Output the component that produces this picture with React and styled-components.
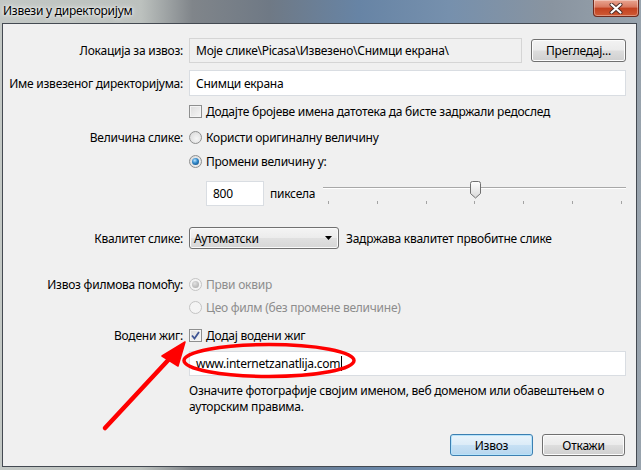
import React from "react";
import styled, { createGlobalStyle } from "styled-components";

const GlobalStyle = createGlobalStyle`
  html, body {
    margin: 0;
    padding: 0;
  }

  body {
    font-family: "Noto Sans", "Open Sans", sans-serif;
    font-size: 12px;
    letter-spacing: -0.25px;
    color: #000000;
  }
`;

const Window = styled.div`
  position: relative;
  width: 641px;
  height: 470px;
  display: flex;
  flex-direction: column;
  overflow: hidden;
  background: linear-gradient(
    90deg,
    #c3c8c5 0%,
    #bcc1be 22%,
    #80858a 30%,
    #6f7985 42%,
    #6784a5 56%,
    #7690ad 70%,
    #8994a0 86%,
    #98a3ad 100%
  );
`;

const TitleBar = styled.div`
  height: 23px;
  display: flex;
  justify-content: space-between;
  align-items: flex-start;
`;

const Title = styled.div`
  padding-left: 3px;
  line-height: 22px;
  color: #000000;
  text-shadow: 0 0 6px #ffffff, 0 0 3px #ffffff;
`;

const CloseButton = styled.div`
  width: 46px;
  height: 17px;
  margin-right: 2px;
  box-sizing: border-box;
  border: 1px solid #6e2a1e;
  border-top: none;
  border-radius: 0 0 4px 4px;
  background: linear-gradient(#e9a591 0%, #d8775e 45%, #c2401f 50%, #cf5a35 100%);
  display: flex;
  justify-content: center;
  align-items: center;
  box-shadow: inset 0 0 0 1px rgba(255, 255, 255, 0.35);
`;

const Client = styled.div`
  flex: 1;
  margin: 0 4px 3px 2px;
  background: #f0f0f0;
  border: 1px solid #444a52;
  display: flex;
  flex-direction: column;
`;

const Row = styled.div`
  display: grid;
  grid-template-columns: 180px 1fr;
  column-gap: 6px;
  align-items: center;
  padding-right: 10px;
  margin-top: ${(p) => p.$top}px;
`;

const Label = styled.div`
  text-align: right;
  white-space: nowrap;
`;

const Inline = styled.div`
  display: flex;
  align-items: center;
  gap: ${(p) => p.$gap || 0}px;
`;

const Field = styled.div`
  flex: 1;
  height: ${(p) => p.$h || 25}px;
  box-sizing: border-box;
  padding: 0 6px;
  display: flex;
  align-items: center;
  white-space: nowrap;
  border: 1px solid ${(p) => (p.$readOnly ? "#d5d5d5" : "#d9dde2")};
  background: ${(p) => (p.$readOnly ? "#f0f0f0" : "#ffffff")};
`;

const Caret = styled.span`
  display: inline-block;
  width: 1px;
  height: 15px;
  margin-left: 1px;
  background: #000000;
`;

const Button = styled.div`
  width: ${(p) => p.$w}px;
  height: ${(p) => p.$h}px;
  box-sizing: border-box;
  display: flex;
  justify-content: center;
  align-items: center;
  border-radius: 3px;
  border: 1px solid ${(p) => (p.$primary ? "#3c7fb1" : "#707070")};
  background: ${(p) =>
    p.$primary
      ? "linear-gradient(#eaf4fb 0%, #dcecf8 48%, #c6e0f4 52%, #b7d6ee 100%)"
      : "linear-gradient(#f3f3f3 0%, #ebebeb 48%, #dddddd 52%, #cfcfcf 100%)"};
  box-shadow: inset 0 0 0 1px ${(p) => (p.$primary ? "#b6e3fb" : "#fcfcfc")};
`;

const Option = styled.div`
  display: flex;
  align-items: center;
  gap: 4px;
  height: 16px;
  white-space: nowrap;
  color: ${(p) => (p.$disabled ? "#8d8d8d" : "#000000")};
`;

const Box = styled.div`
  width: 13px;
  height: 13px;
  box-sizing: border-box;
  border: 1px solid #8e8f8f;
  background: linear-gradient(135deg, #dcdcdc 0%, #f6f6f6 100%);
  box-shadow: inset 0 0 0 1px #f4f4f4;
  display: flex;
  justify-content: center;
  align-items: center;
`;

const Radio = styled.div`
  width: 13px;
  height: 13px;
  box-sizing: border-box;
  border-radius: 50%;
  border: 1px solid ${(p) => (p.$disabled ? "#c4c4c4" : "#8e8f8f")};
  background: ${(p) =>
    p.$disabled
      ? "#f4f4f4"
      : "radial-gradient(circle at 60% 60%, #f6f6f6 0%, #d6d6d6 100%)"};
  display: flex;
  justify-content: center;
  align-items: center;
`;

const Dot = styled.div`
  width: 7px;
  height: 7px;
  border-radius: 50%;
  background: ${(p) =>
    p.$disabled
      ? "radial-gradient(circle at 40% 35%, #e2e2e2 0%, #a4a4a4 100%)"
      : "radial-gradient(circle at 40% 35%, #b7e3ff 0%, #2d85c7 45%, #0d3f70 100%)"};
`;

const SizeInput = styled(Field)`
  flex: none;
  width: 58px;
  margin-left: 17px;
`;

const Unit = styled.span`
  margin-left: 6px;
`;

const Slider = styled.div`
  position: relative;
  width: 303px;
  height: 25px;
  margin-left: auto;
`;

const Track = styled.div`
  position: absolute;
  top: 6px;
  left: 0;
  right: 0;
  height: 1px;
  background: #a8a8a8;
  border-bottom: 1px solid #ffffff;
`;

const Ticks = styled.div`
  position: absolute;
  top: 20px;
  left: 5px;
  right: 4px;
  display: flex;
  justify-content: space-between;
`;

const Tick = styled.div`
  width: 1px;
  height: 3px;
  background: #a3a3a3;
`;

const Thumb = styled.svg`
  position: absolute;
  top: 0;
`;

const Select = styled.div`
  width: 150px;
  height: 22px;
  box-sizing: border-box;
  display: flex;
  align-items: center;
  justify-content: space-between;
  padding: 0 6px 0 4px;
  border: 1px solid #707070;
  border-radius: 3px;
  background: linear-gradient(#f4f4f4 0%, #ececec 48%, #e0e0e0 52%, #d6d6d6 100%);
  box-shadow: inset 0 0 0 1px #fafafa;
`;

const Note = styled.span`
  margin-left: 7px;
  white-space: nowrap;
`;

const Help = styled.div`
  line-height: 16px;
`;

const Footer = styled.div`
  display: flex;
  justify-content: flex-end;
  gap: 9px;
  padding-right: 11px;
  margin-top: 19px;
`;

const Overlay = styled.svg`
  position: absolute;
  inset: 0;
  pointer-events: none;
`;

function Check() {
  return (
    <svg width="9" height="9" viewBox="0 0 9 9">
      <path d="M1 4.5 L3.5 7.5 L8 1" fill="none" stroke="#3e5494" strokeWidth="1.8" />
    </svg>
  );
}

function RadioOption({ checked, disabled, children }) {
  return (
    <Option $disabled={disabled}>
      <Radio $disabled={disabled}>{checked && <Dot $disabled={disabled} />}</Radio>
      {children}
    </Option>
  );
}

const TICKS = 7;
const SLIDER_VALUE = 3;

function App() {
  const thumbLeft = 5 + (SLIDER_VALUE / (TICKS - 1)) * 294 - 5;

  return (
    <Window>
      <GlobalStyle />
      <TitleBar>
        <Title>Извези у директоријум</Title>
        <CloseButton>
          <svg width="14" height="11" viewBox="0 0 14 11">
            <path d="M2.5 1.5 L11.5 9.5 M11.5 1.5 L2.5 9.5" stroke="#4a2a25" strokeWidth="4" strokeLinecap="round" />
            <path d="M2.5 1.5 L11.5 9.5 M11.5 1.5 L2.5 9.5" stroke="#ffffff" strokeWidth="2.2" strokeLinecap="round" />
          </svg>
        </CloseButton>
      </TitleBar>

      <Client>
        <Row $top={14}>
          <Label>Локација за извоз:</Label>
          <Inline $gap={9}>
            <Field $readOnly>Моје слике\Picasa\Извезено\Снимци екрана\</Field>
            <Button $w={95} $h={23}>Прегледај...</Button>
          </Inline>
        </Row>

        <Row $top={7}>
          <Label>Име извезеног директоријума:</Label>
          <Field $h={26}>Снимци екрана</Field>
        </Row>

        <Row $top={7}>
          <Label />
          <Option>
            <Box />
            Додајте бројеве имена датотека да бисте задржали редослед
          </Option>
        </Row>

        <Row $top={10}>
          <Label>Величина слике:</Label>
          <RadioOption>Користи оригиналну величину</RadioOption>
        </Row>

        <Row $top={7}>
          <Label />
          <RadioOption checked>Промени величину у:</RadioOption>
        </Row>

        <Row $top={12}>
          <Label />
          <Inline>
            <SizeInput>800</SizeInput>
            <Unit>пиксела</Unit>
            <Slider>
              <Track />
              <Ticks>
                {Array.from({ length: TICKS }).map((_, i) => (
                  <Tick key={i} />
                ))}
              </Ticks>
              <Thumb width="11" height="18" viewBox="0 0 11 18" style={{ left: thumbLeft }}>
                <defs>
                  <linearGradient id="thumb" x1="0" y1="0" x2="0" y2="1">
                    <stop offset="0" stopColor="#ffffff" />
                    <stop offset="1" stopColor="#d8d8d8" />
                  </linearGradient>
                </defs>
                <path
                  d="M0.5 2.5 Q0.5 0.5 2.5 0.5 H8.5 Q10.5 0.5 10.5 2.5 V12.5 L5.5 17 L0.5 12.5 Z"
                  fill="url(#thumb)"
                  stroke="#707070"
                />
              </Thumb>
            </Slider>
          </Inline>
        </Row>

        <Row $top={21}>
          <Label>Квалитет слике:</Label>
          <Inline>
            <Select>
              Аутоматски
              <svg width="7" height="4" viewBox="0 0 7 4">
                <path d="M0 0 H7 L3.5 4 Z" fill="#000000" />
              </svg>
            </Select>
            <Note>Задржава квалитет првобитне слике</Note>
          </Inline>
        </Row>

        <Row $top={27}>
          <Label>Извоз филмова помоћу:</Label>
          <RadioOption checked disabled>Први оквир</RadioOption>
        </Row>

        <Row $top={6}>
          <Label />
          <RadioOption disabled>Цео филм (без промене величине)</RadioOption>
        </Row>

        <Row $top={12}>
          <Label>Водени жиг:</Label>
          <Option>
            <Box>
              <Check />
            </Box>
            Додај водени жиг
          </Option>
        </Row>

        <Row $top={7}>
          <Label />
          <Field>
            www.internetzanatlija.com
            <Caret />
          </Field>
        </Row>

        <Row $top={7}>
          <Label />
          <Help>
            Означите фотографије својим именом, веб доменом или обавештењем о ауторским правима.
          </Help>
        </Row>

        <Footer>
          <Button $w={83} $h={22} $primary>Извоз</Button>
          <Button $w={83} $h={22}>Откажи</Button>
        </Footer>
      </Client>

      <Overlay width="641" height="470" viewBox="0 0 641 470">
        <ellipse cx="269" cy="360.5" rx="85" ry="16" fill="none" stroke="#ff0000" strokeWidth="3.5" />
        <path d="M105 428 L172 356" stroke="#ff0000" strokeWidth="4.5" strokeLinecap="round" />
        <path d="M185 342 L162 356 L178 366 Z" fill="#ff0000" stroke="#ff0000" strokeWidth="1.5" strokeLinejoin="round" />
      </Overlay>
    </Window>
  );
}

export default App;
